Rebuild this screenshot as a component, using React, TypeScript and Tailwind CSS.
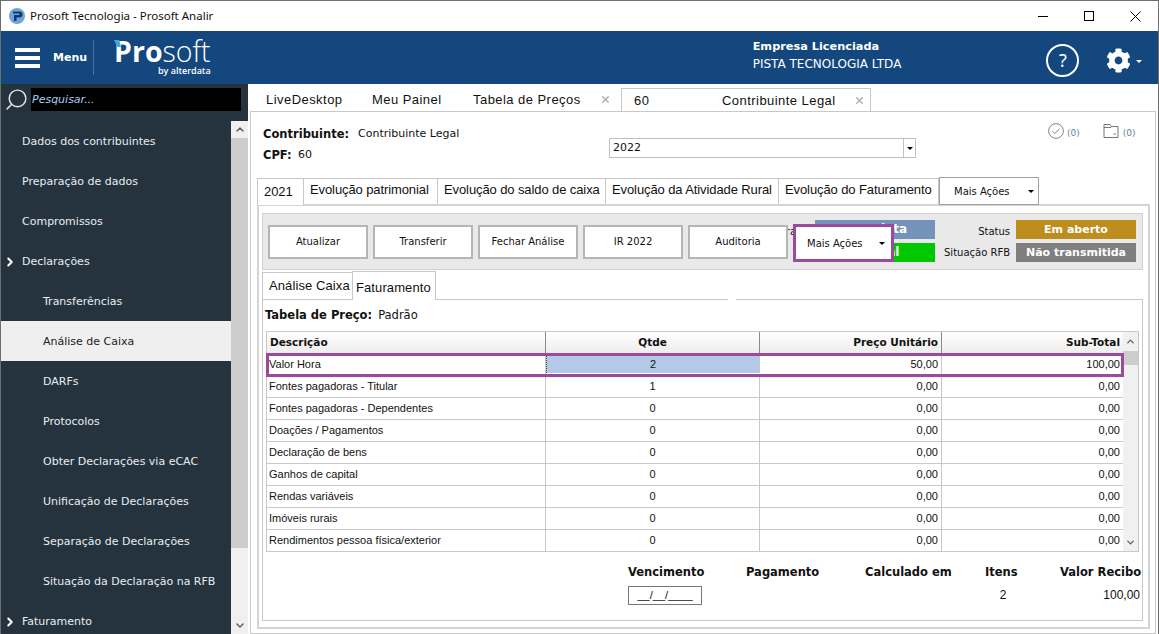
import { ChevronDown, ChevronRight, ChevronUp, Search, X } from "lucide-react";
import { FaCog } from "react-icons/fa";

/*======= DATA =======*/
const NAV_ITEMS = [
  { label: "Dados dos contribuintes", level: 0 },
  { label: "Preparação de dados", level: 0 },
  { label: "Compromissos", level: 0 },
  { label: "Declarações", level: 0, arrow: true },
  { label: "Transferências", level: 1 },
  { label: "Análise de Caixa", level: 1, active: true },
  { label: "DARFs", level: 1 },
  { label: "Protocolos", level: 1 },
  { label: "Obter Declarações via eCAC", level: 1 },
  { label: "Unificação de Declarações", level: 1 },
  { label: "Separação de Declarações", level: 1 },
  { label: "Situação da Declaração na RFB", level: 1 },
  { label: "Faturamento", level: 0, arrow: true },
];

const ROWS = [
  ["Valor Hora", "2", "50,00", "100,00"],
  ["Fontes pagadoras - Titular", "1", "0,00", "0,00"],
  ["Fontes pagadoras - Dependentes", "0", "0,00", "0,00"],
  ["Doações / Pagamentos", "0", "0,00", "0,00"],
  ["Declaração de bens", "0", "0,00", "0,00"],
  ["Ganhos de capital", "0", "0,00", "0,00"],
  ["Rendas variáveis", "0", "0,00", "0,00"],
  ["Imóveis rurais", "0", "0,00", "0,00"],
  ["Rendimentos pessoa física/exterior", "0", "0,00", "0,00"],
];

const TABLE_COLUMNS = "grid grid-cols-[279px_214px_182px_181px]";
const ARIAL = "font-['Liberation_Sans',Arial,sans-serif]";

/*======= APP =======*/
export default function App() {
  return (
    <div className="w-[1159px] h-[634px] overflow-hidden flex flex-col bg-white border border-b-0 border-[#6e6e6e] font-['DejaVu_Sans',sans-serif] text-[11px] text-[#111]">
      <TitleBar />
      <Header />
      <div className="flex-1 min-h-0 flex">
        <Sidebar />
        <Workspace />
      </div>
    </div>
  );
}

/*======= WINDOW CHROME =======*/
function TitleBar() {
  return (
    <div className="h-[30px] shrink-0 flex items-center pl-[8px] bg-white font-['Noto_Sans',sans-serif] text-[11.5px]">
      <svg viewBox="0 0 16 16" className="size-[16px] mr-[5px]">
        <circle cx="8" cy="8" r="8" fill="#6ea6d8" />
        <path d="M4 3.5h6.5a2.5 2.5 0 0 1 0 6H7.5V13H5V7h5a.8.8 0 0 0 0-1.4H4z" fill="#14386b" />
      </svg>
      <span>Prosoft Tecnologia - Prosoft Analir</span>
      <div className="ml-auto flex items-center">
        <span className="w-[46px] flex justify-center">
          <span className="w-[10px] h-px bg-black" />
        </span>
        <span className="w-[46px] flex justify-center">
          <span className="size-[10px] border border-black" />
        </span>
        <span className="w-[46px] flex justify-center">
          <svg viewBox="0 0 11 11" className="size-[11px]" fill="none" stroke="black" strokeWidth="1">
            <path d="M0.5 0.5l10 10M10.5 0.5l-10 10" />
          </svg>
        </span>
      </div>
    </div>
  );
}

function Header() {
  return (
    <div className="h-[53px] shrink-0 flex items-center bg-[#14477d] text-white">
      <div className="ml-[14px] mt-[1px] w-[25px] flex flex-col gap-[4px]">
        <span className="h-[4px] bg-white" />
        <span className="h-[4px] bg-white" />
        <span className="h-[4px] bg-white" />
      </div>
      <span className="ml-[13px] mt-[2px] font-bold">Menu</span>
      <span className="ml-[6px] w-px h-[35px] bg-[#4d739c]" />

      {/* LOGO */}
      <div className="ml-[20px] relative flex flex-col items-end font-['Open_Sans',sans-serif]">
        <svg viewBox="0 0 8 8" className="absolute left-0 top-[1px] size-[7px]">
          <path d="M0 0h6l2 8H4z" fill="#3fa9dc" />
        </svg>
        <span className="text-[28.5px] h-[25px] leading-[25px]">
          <span className="font-bold">Pro</span>
          <span className="font-light">soft</span>
        </span>
        <span className="mt-[2px] h-[10px] text-[9px] leading-[10px] font-semibold">by alterdata</span>
      </div>

      {/* LICENSE */}
      <div className="ml-[542px] -mt-[4px] flex flex-col gap-[3px] leading-[15px]">
        <span className="font-bold text-[11.3px]">Empresa Licenciada</span>
        <span className="text-[12px]">PISTA TECNOLOGIA LTDA</span>
      </div>

      {/* ACTIONS */}
      <span className="ml-[145px] mt-[6px] size-[33px] rounded-full border-2 border-white flex items-center justify-center text-[18px] font-['Noto_Sans',sans-serif]">
        ?
      </span>
      <FaCog className="ml-[27px] mt-[5px] size-[25px]" />
      <span className="ml-[5px] mt-[8px] border-x-[3px] border-t-[3px] border-x-transparent border-t-white" />
    </div>
  );
}

/*======= SIDEBAR =======*/
function Sidebar() {
  return (
    <div className="w-[247px] shrink-0 flex flex-col bg-[#25333f]">
      <div className="h-[37px] shrink-0 flex items-center pl-[3px] pb-[6px]">
        <Search className="size-[25px] text-[#e4e4e4] -scale-x-100" strokeWidth={1.4} />
        <div className="ml-[2px] w-[210px] h-[23px] bg-black italic text-[#a8cdf0] text-[11px] pl-[1px] pt-[1px] leading-[22px]">
          Pesquisar...
        </div>
      </div>
      <div className="flex-1 min-h-0 flex">
        <nav className="w-[230px] shrink-0 overflow-hidden">
          {NAV_ITEMS.map((item) => (
            <NavRow key={item.label} {...item} />
          ))}
        </nav>
        <div className="w-[17px] shrink-0 flex flex-col items-center bg-[#f0f0f0] text-[#606060]">
          <ChevronUp className="h-[17px] w-[12px] shrink-0" strokeWidth={3} />
          <div className="w-full h-[410px] bg-[#cdcdcd]" />
          <div className="flex-1" />
          <ChevronDown className="h-[17px] w-[12px] shrink-0" strokeWidth={3} />
        </div>
      </div>
    </div>
  );
}

function NavRow({
  label,
  level,
  active,
  arrow,
}: {
  label: string;
  level: number;
  active?: boolean;
  arrow?: boolean;
}) {
  return (
    <div
      className={[
        "relative h-[40px] flex items-center pt-[2px]",
        level === 1 ? "pl-[42px]" : "pl-[21px]",
        active ? "bg-[#efefef] text-[#222]" : "text-[#e8edf0]",
      ].join(" ")}
    >
      {arrow && (
        <ChevronRight
          className="absolute left-[2px] top-[14px] size-[14px] text-white"
          strokeWidth={3.5}
        />
      )}
      {label}
    </div>
  );
}

/*======= WORKSPACE =======*/
function Workspace() {
  return (
    <div className="flex-1 min-w-0 flex flex-col bg-white">
      {/* DOCUMENT TABS */}
      <div className={`h-[27px] shrink-0 flex items-end pl-[3px] ${ARIAL} text-[13px] tracking-[0.45px] whitespace-nowrap`}>
        <span className="w-[121px] pl-[15px] pb-[2px]">LiveDesktop</span>
        <span className="w-[101px] pb-[2px]">Meu Painel</span>
        <span className="w-[127px] pb-[2px]">Tabela de Preços</span>
        <X className="mb-[6px] size-[11px] text-[#b0b0b0]" strokeWidth={3} />
        <div className="ml-[10px] w-[250px] h-[23px] pl-[12px] pt-[1px] flex items-center border border-b-0 border-[#c8c8c8]">
          <span className="w-[88px]">60</span>
          <span className="w-[132px]">Contribuinte Legal</span>
          <X className="size-[11px] text-[#b0b0b0]" strokeWidth={3} />
        </div>
      </div>

      {/* DOCUMENT PANEL */}
      <div className="flex-1 min-h-0 ml-[2px] mr-[2px] border border-[#c8c8c8] flex flex-col">
        <SubjectInfo />
        <AnalysisTabs />
        <div className="ml-[6px] mr-[5px] h-[425px] shrink-0 border-2 border-[#d4d4d4] pl-[3px] pr-[5px] pt-[7px]">
          <Toolbar />
          <InnerTabs />
          <PricePanel />
        </div>
      </div>
    </div>
  );
}

function SubjectInfo() {
  return (
    <div className="h-[66px] shrink-0 relative flex pl-[12px] pt-[15px]">
      <div className="w-[346px] flex flex-col gap-[7px] leading-[14px] text-[12px]">
        <div className="flex">
          <span className="w-[95px] font-bold text-[11.5px]">Contribuinte:</span>
          <span className="text-[11px]">Contribuinte Legal</span>
        </div>
        <div className="flex">
          <span className="w-[35px] font-bold text-[11.5px]">CPF:</span>
          <span className="text-[11px]">60</span>
        </div>
      </div>
      <div className="mt-[11px] w-[307px] h-[20px] flex border border-[#c0c0c0] text-[11px]">
        <span className="flex-1 pl-[3px] leading-[18px]">2022</span>
        <span className="w-[12px] flex items-center justify-center border-l border-[#c0c0c0]">
          <span className="border-x-[3px] border-t-[3px] border-x-transparent border-t-black" />
        </span>
      </div>
      <div className="ml-[132px] -mt-[6px] flex items-center h-[20px] text-[9px] text-[#6b7f99]">
        <svg viewBox="0 0 16 16" className="size-[16px] text-[#777]" fill="none" stroke="currentColor" strokeWidth="0.9">
          <circle cx="8" cy="8" r="7.4" />
          <path d="M4.5 8.2l2.4 2.4 4.6-5" />
        </svg>
        <span className="ml-[3px] mt-[5px]">(0)</span>
        <svg viewBox="0 0 16 16" className="ml-[23px] size-[16px] text-[#666]" fill="none" stroke="currentColor" strokeWidth="0.9">
          <path d="M1 14.5V1.5h6l1.2 2h6.8v11zM1 4.5h7.2M10.5 11h2.5" />
        </svg>
        <span className="ml-[4px] mt-[5px]">(0)</span>
      </div>
    </div>
  );
}

function AnalysisTabs() {
  const labels = [
    { label: "Evolução patrimonial", width: "w-[134px]" },
    { label: "Evolução do saldo de caixa", width: "w-[168px]" },
    { label: "Evolução da Atividade Rural", width: "w-[173px]" },
    { label: "Evolução do Faturamento", width: "w-[160px]" },
  ];

  return (
    <div className={`h-[27px] shrink-0 flex ml-[6px] ${ARIAL} text-[13px] tracking-[-0.1px] relative z-10 -mb-[1px]`}>
      <span className="w-[47px] h-[27px] pt-[3px] pl-[6px] bg-white border border-b-0 border-[#c8c8c8]">2021</span>
      {labels.map((tab) => (
        <span
          key={tab.label}
          className={`${tab.width} h-[26px] pt-[1px] pl-[6px] border-t border-r border-[#c8c8c8] whitespace-nowrap`}
        >
          {tab.label}
        </span>
      ))}
      <span className="w-[100px] h-[28px] -mt-[1px] flex items-center justify-between pl-[14px] pr-[4px] border border-[#a0a0a0] bg-white font-['DejaVu_Sans',sans-serif] text-[10px] tracking-normal">
        Mais Ações
        <span className="border-x-[3px] border-t-[3px] border-x-transparent border-t-black" />
      </span>
    </div>
  );
}

function Toolbar() {
  const buttons = ["Atualizar", "Transferir", "Fechar Análise", "IR 2022", "Auditoria"];

  return (
    <div className="relative h-[57px] flex items-center bg-[#e9e9e9] border border-[#d0d0d0] pl-[5px] text-[10px]">
      {buttons.map((label) => (
        <button
          key={label}
          className="relative z-10 w-[100px] h-[34px] mr-[5px] bg-white border-2 border-[#b5b5b5]"
        >
          {label}
        </button>
      ))}

      <div className="-ml-[131px] w-[153px] flex flex-col items-end gap-[6px] text-[10.5px] leading-[15px] pt-[1px]">
        <span>Declaração</span>
        <span>Tipo</span>
      </div>
      <div className="-mt-[2px] flex flex-col gap-[4px] w-[120px] text-center text-white font-bold text-[12px] leading-[19px]">
        <span className="bg-[#7393bb]">Completa</span>
        <span className="bg-[#00c800]">Normal</span>
      </div>

      <div className="w-[75px] flex flex-col items-end gap-[6px] text-[10px] leading-[15px] pt-[1px] whitespace-nowrap">
        <span>Status</span>
        <span>Situação RFB</span>
      </div>
      <div className="ml-[6px] -mt-[2px] flex flex-col gap-[4px] w-[120px] text-center text-white font-bold text-[11px] leading-[19px]">
        <span className="bg-[#bd8d1d]">Em aberto</span>
        <span className="bg-[#7f7f7f]">Não transmitida</span>
      </div>

      {/* HIGHLIGHTED DROPDOWN */}
      <div className="absolute z-20 left-[530px] top-[10px] w-[101px] h-[38px] flex items-center justify-between pl-[11px] pr-[6px] bg-white border-[3px] border-[#9c4a9f]">
        Mais Ações
        <span className="border-x-[3px] border-t-[3px] border-x-transparent border-t-black" />
      </div>
    </div>
  );
}

function InnerTabs() {
  return (
    <div className={`relative z-10 h-[30px] flex items-end -mb-[1px] ${ARIAL} text-[13px] tracking-[0.1px]`}>
      <span className="w-[90px] h-[28px] pl-[6px] pt-[3px] border-l border-t border-[#c8c8c8] whitespace-nowrap">
        Análise Caixa
      </span>
      <span className="w-[84px] h-[29px] pl-[3px] pt-[6px] bg-white border border-b-0 border-[#c8c8c8] whitespace-nowrap">
        Faturamento
      </span>
    </div>
  );
}

/*======= PRICE PANEL =======*/
function PricePanel() {
  return (
    <div className="relative h-[322px] border border-[#c8c8c8] px-[3px]">
      <span className="absolute left-[465px] -top-px w-[8px] h-px bg-white" />
      <div className="h-[31px] -ml-px flex items-center gap-[6px] pt-[1px] text-[11.5px]">
        <span className="font-bold">Tabela de Preço:</span>
        <span>Padrão</span>
      </div>
      <PriceTable />
      <Summary />
    </div>
  );
}

function PriceTable() {
  return (
    <div className="flex h-[221px] border border-[#c8c8c8]">
      <div className="w-[856px] shrink-0">
        <div className={`${TABLE_COLUMNS} h-[22px] bg-gradient-to-b from-white to-[#ededed] border-b border-[#c8c8c8] font-bold text-[10.5px] leading-[21px]`}>
          <span className="pl-[3px] border-r border-[#8a8a8a]">Descrição</span>
          <span className="text-center border-r border-[#8a8a8a]">Qtde</span>
          <span className="text-right pr-[3px] border-r border-[#8a8a8a]">Preço Unitário</span>
          <span className="text-right pr-[3px]">Sub-Total</span>
        </div>
        {ROWS.map((row, index) => (
          <div
            key={row[0]}
            className={[
              TABLE_COLUMNS,
              ARIAL,
              "relative h-[22px] border-b border-[#c8c8c8] leading-[21px] last:border-b-0",
              index === 0 ? "z-10 outline-[3px] outline-[#9c4a9f] -outline-offset-2" : "",
            ].join(" ")}
          >
            <span className="pl-[2px] border-r border-[#c8c8c8]">{row[0]}</span>
            <span
              className={[
                "text-center border-r border-[#c8c8c8]",
                index === 0 ? "bg-[#b4c9e8] border-l border-dotted border-l-[#444] my-[2px] leading-[17px]" : "",
              ].join(" ")}
            >
              {row[1]}
            </span>
            <span className="text-right pr-[3px] border-r border-[#c8c8c8]">{row[2]}</span>
            <span className="text-right pr-[3px]">{row[3]}</span>
          </div>
        ))}
      </div>
      <div className="flex-1 flex flex-col items-center bg-[#f0f0f0] text-[#606060]">
        <ChevronUp className="h-[19px] w-[11px] shrink-0" strokeWidth={3} />
        <div className="w-full h-[14px] bg-[#cdcdcd]" />
        <div className="flex-1" />
        <ChevronDown className="h-[17px] w-[11px] shrink-0" strokeWidth={3} />
      </div>
    </div>
  );
}

function Summary() {
  return (
    <div className="ml-[362px] mt-[12px] grid grid-cols-[118px_119px_120px_75px_80px] grid-rows-[16px_26px] gap-y-[6px] font-bold text-[11.5px] leading-[16px]">
      <span>Vencimento</span>
      <span>Pagamento</span>
      <span>Calculado em</span>
      <span>Itens</span>
      <span className="text-right whitespace-nowrap">Valor Recibo</span>
      <span className={`w-[74px] h-[19px] border border-[#777] ${ARIAL} font-normal text-[11px] text-center leading-[17px]`}>__/__/____</span>
      <span />
      <span />
      <span className={`w-[36px] pt-[1px] ${ARIAL} font-normal text-[12px] text-center`}>2</span>
      <span className={`pt-[1px] ${ARIAL} font-normal text-[12px] text-right`}>100,00</span>
    </div>
  );
}
